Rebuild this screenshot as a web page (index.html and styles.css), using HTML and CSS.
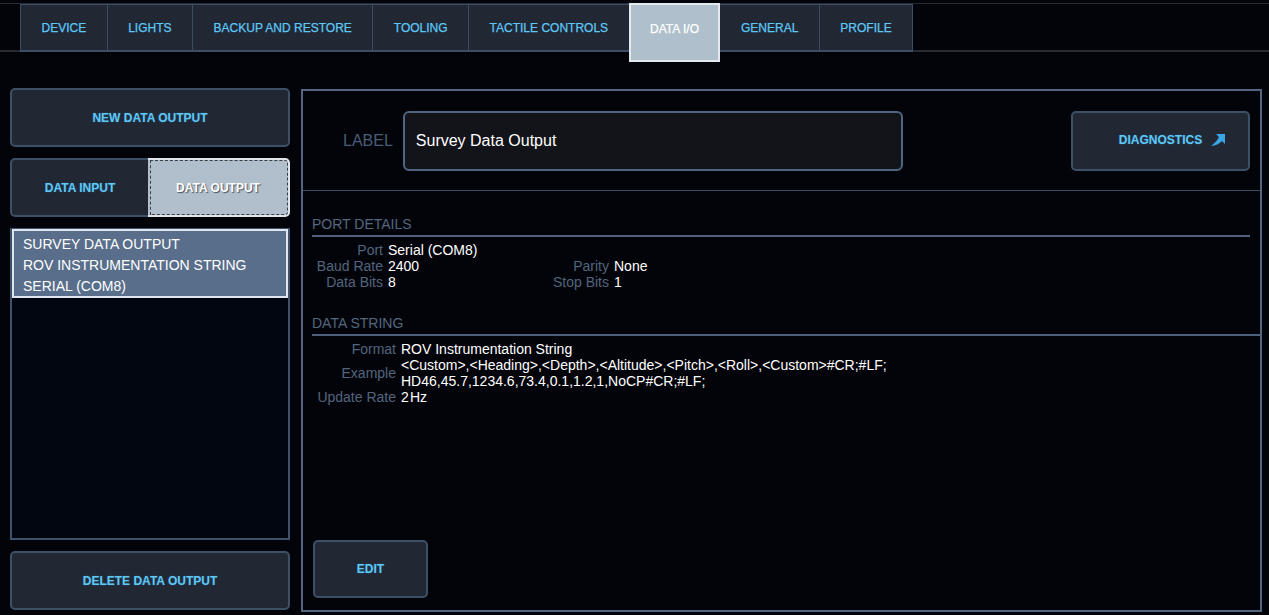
FILE: index.html
```html
<!DOCTYPE html>
<html>
<head>
<meta charset="utf-8">
<link rel="stylesheet" href="styles.css">
</head>
<body>
<header class="topbar">
  <nav class="tabs">
    <div class="tab">DEVICE</div>
    <div class="tab">LIGHTS</div>
    <div class="tab">BACKUP AND RESTORE</div>
    <div class="tab">TOOLING</div>
    <div class="tab">TACTILE CONTROLS</div>
    <div class="tab active">DATA I/O</div>
    <div class="tab">GENERAL</div>
    <div class="tab">PROFILE</div>
  </nav>
</header>
<main class="main">
  <aside class="side">
    <div class="btn">NEW DATA OUTPUT</div>
    <div class="toggle">
      <div class="tg">DATA INPUT</div>
      <div class="tg on">DATA OUTPUT</div>
    </div>
    <div class="list">
      <div class="item sel">SURVEY DATA OUTPUT<br>ROV INSTRUMENTATION STRING<br>SERIAL (COM8)</div>
    </div>
    <div class="btn">DELETE DATA OUTPUT</div>
  </aside>
  <section class="panel">
    <div class="label-row">
      <span class="label">LABEL</span>
      <div class="input">Survey Data Output</div>
      <div class="btn diag">DIAGNOSTICS
        <svg class="arrow" width="14" height="12" viewBox="0 0 14 12"><path d="M5 0 L14 0 L14 10 L11 7 C8 10 5 11.5 0 12 C2 10.5 6 7 8 3 Z" fill="#3aa6e6"/></svg>
      </div>
    </div>
    <div class="sec port">
      <div class="sec-title">PORT DETAILS</div>
      <div class="grid g4">
        <span class="k">Port</span><span class="v">Serial (COM8)</span><span></span><span></span>
        <span class="k">Baud Rate</span><span class="v">2400</span><span class="k">Parity</span><span class="v">None</span>
        <span class="k">Data Bits</span><span class="v">8</span><span class="k">Stop Bits</span><span class="v">1</span>
      </div>
    </div>
    <div class="sec data">
      <div class="sec-title">DATA STRING</div>
      <div class="grid g2">
        <span class="k">Format</span><span class="v">ROV Instrumentation String</span>
        <span class="k">Example</span><span class="v">&lt;Custom&gt;,&lt;Heading&gt;,&lt;Depth&gt;,&lt;Altitude&gt;,&lt;Pitch&gt;,&lt;Roll&gt;,&lt;Custom&gt;#CR;#LF;<br>HD46,45.7,1234.6,73.4,0.1,1.2,1,NoCP#CR;#LF;</span>
        <span class="k">Update Rate</span><span class="v">2&#8202;Hz</span>
      </div>
    </div>
    <div class="btn edit">EDIT</div>
  </section>
</main>
</body>
</html>
```
FILE: styles.css
```css
* { box-sizing: border-box; }
html, body { margin: 0; padding: 0; }
body {
  background: #03040a;
  font-family: "Liberation Sans", Arial, sans-serif;
  height: 615px;
  overflow: hidden;
}

/* top navigation */
.topbar {
  margin-top: 3px;
  height: 49px;
  border-top: 1px solid #262b34;
  border-bottom: 2px solid #262b34;
  padding-left: 20px;
}
.tabs {
  display: flex;
  height: 100%;
  align-items: stretch;
}
.tab {
  display: flex;
  align-items: center;
  padding: 1px 20.5px 0;
  margin-bottom: -2px;
  background: #212733;
  color: #5ec8f7;
  -webkit-text-stroke: 0.25px #5ec8f7;
  font-size: 12px;
  border-top: 1px solid #3b4e66;
  border-bottom: 2px solid #3b4e66;
  border-right: 1px solid #3b4e66;
}
.tab:first-child { border-left: 1px solid #3b4e66; }
.tab.active {
  margin-top: -1px;
  margin-bottom: -12px;
  margin-left: -1px;
  padding: 2px 19.5px 10px;
  background: #b0bfcc;
  color: #fff;
  -webkit-text-stroke: 0.25px #fff;
  border: 2px solid #e4e9ee;
}
.tab.active + .tab { border-left: 0; }

/* main layout */
.main {
  display: flex;
  gap: 11px;
  padding: 36px 7px 0 10px;
}
.side {
  width: 280px;
  display: flex;
  flex-direction: column;
  gap: 11px;
  height: 522px;
}
.btn {
  height: 59px;
  display: flex;
  align-items: center;
  justify-content: center;
  background: #212733;
  border: 2px solid #3c5068;
  border-radius: 5px;
  color: #5ec8f7;
  font-size: 12px;
  font-weight: bold;
  text-shadow: 0 0 2px rgba(60, 170, 230, 0.35);
}
.toggle {
  height: 59px;
  display: flex;
  border: 2px solid #3c5068;
  border-radius: 5px;
  background: #212733;
}
.tg {
  flex: 1;
  display: flex;
  align-items: center;
  justify-content: center;
  color: #5ec8f7;
  font-size: 12px;
  font-weight: bold;
  text-shadow: 0 0 2px rgba(60, 170, 230, 0.35);
}
.tg.on {
  margin: -2px -2px -2px 0;
  background: #b1bfcc;
  border: 2px solid #dfe5eb;
  border-left: 0;
  border-radius: 0 5px 5px 0;
  outline: 1px dashed #3a3f46;
  outline-offset: -3px;
  color: #fff;
  text-shadow: 1px 1px 1px #4a5360;
}
.tg:first-child { flex: 0 0 136px; }
.list {
  flex: 1;
  background: #020610;
  border: 2px solid #3e536b;
  border-top-width: 1px;
}
.item {
  color: #fff;
  font-size: 14px;
  line-height: 21px;
  padding: 3px 0 0 9px;
  height: 69px;
}
.item.sel {
  background: #586e8b;
  border: 2px solid #dfe5ec;
}

/* right panel */
.panel {
  flex: 1;
  margin-top: 1px;
  height: 523px;
  border: 2px solid #52677f;
  display: flex;
  flex-direction: column;
}
.label-row {
  height: 100px;
  border-bottom: 1px solid #3d4d63;
  display: flex;
  align-items: center;
  padding: 0 10px 0 40px;
}
.label {
  color: #4a5d76;
  font-size: 16px;
  margin-right: 10px;
}
.input {
  width: 500px;
  height: 60px;
  display: flex;
  align-items: center;
  padding-left: 11px;
  background: #121419;
  border: 2px solid #4f6580;
  border-radius: 6px;
  color: #fff;
  font-size: 16px;
}
.diag {
  margin-left: auto;
  width: 179px;
  height: 60px;
  padding-bottom: 2px;
}
.arrow {
  margin-left: 9px;
  margin-right: -23px;
}
.sec { font-size: 14px; }
.sec.port { padding: 0 10px 0 9px; }
.sec.data { padding: 0 0 0 9px; }
.sec-title {
  margin-top: 25px;
  line-height: 16px;
  padding-bottom: 3px;
  border-bottom: 2px solid #4d617a;
  color: #53677f;
}
.grid {
  display: grid;
  margin-top: 5px;
  column-gap: 5px;
  line-height: 16px;
  align-items: center;
}
.g4 { grid-template-columns: 71px 145px 71px 1fr; }
.g2 { grid-template-columns: 84px 1fr; }
.k { color: #52657d; text-align: right; }
.v { color: #fff; }
.edit {
  margin: auto 0 12px 10px;
  width: 115px;
  height: 58px;
}
```
